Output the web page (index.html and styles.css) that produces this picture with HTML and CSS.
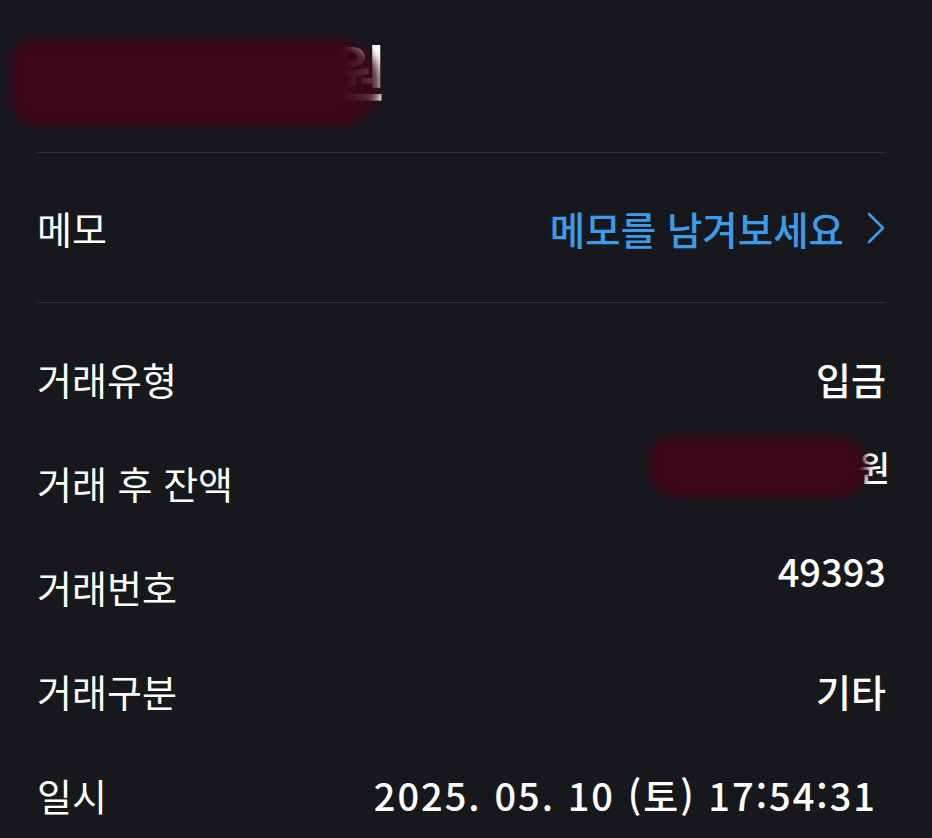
FILE: index.html
```html
<!DOCTYPE html>
<html lang="ko">
<head>
<meta charset="utf-8">
<link rel="stylesheet" href="styles.css">
</head>
<body>
<div class="page">
  <div class="amount">
    <span class="amount-hidden"></span><span class="won">원</span>
    <span class="blob blob-top"></span>
  </div>
  <div class="divider"></div>
  <div class="memo-row">
    <span class="label">메모</span>
    <span class="memo-link">메모를 남겨보세요
      <svg class="chev" viewBox="0 0 20 34" width="20" height="34"><path d="M3 3 L17 17 L3 31" fill="none" stroke="#3d9be9" stroke-width="2.6" stroke-linecap="round" stroke-linejoin="round"/></svg>
    </span>
  </div>
  <div class="divider"></div>
  <div class="details">
    <div class="row"><span class="label">거래유형</span><span class="value">입금</span></div>
    <div class="row"><span class="label">거래 후 잔액</span><span class="value raised balance"><span class="bal-hidden"></span><span class="won-sm">원</span><span class="blob blob-bal"></span></span></div>
    <div class="row"><span class="label">거래번호</span><span class="value raised">49393</span></div>
    <div class="row"><span class="label">거래구분</span><span class="value">기타</span></div>
    <div class="row"><span class="label">일시</span><span class="value date">2025. 05. 10 (토) 17:54:31</span></div>
  </div>
</div>
</body>
</html>
```
FILE: styles.css
```css
html, body {
  margin: 0;
  padding: 0;
  background: #17181c;
}
body {
  font-family: "Noto Sans CJK KR", "Noto Sans", sans-serif;
  color: #ffffff;
  width: 932px;
  height: 838px;
  overflow: hidden;
}
.page {
  padding: 0 46px 0 37px;
}
.amount {
  position: relative;
  height: 152px;
  display: flex;
  align-items: center;
  font-size: 60px;
  font-weight: 700;
  line-height: 1;
}
.amount-hidden {
  display: inline-block;
  width: 294px;
}
.won {
  position: relative;
  top: -6px;
}
.blob {
  position: absolute;
  background: #3c0718;
  filter: blur(5px);
}
.blob-top {
  left: -26px;
  top: 40px;
  width: 370px;
  height: 86px;
  border-radius: 30px 60px 60px 40px;
  background: linear-gradient(90deg, #3c0718 0%, #3c0718 90%, rgba(60, 7, 24, 0.8) 100%);
}
.divider {
  height: 1px;
  background: #2d2e33;
}
.memo-row {
  height: 149px;
  display: flex;
  align-items: center;
  justify-content: space-between;
}
.label {
  font-size: 38px;
  font-weight: 400;
  color: #ffffff;
}
.memo-link {
  font-size: 38.5px;
  font-weight: 500;
  color: #3d9be9;
  display: flex;
  align-items: center;
  gap: 22px;
}
.chev {
  display: block;
}
.details {
  padding-top: 23px;
}
.row {
  height: 104px;
  display: flex;
  align-items: center;
  justify-content: space-between;
}
.value {
  font-size: 38px;
  font-weight: 500;
}
.raised {
  margin-bottom: 32px;
}
.balance {
  position: relative;
  display: flex;
  align-items: center;
  margin-right: -4px;
}
.bal-hidden {
  display: inline-block;
  width: 214px;
}
.won-sm {
  position: relative;
  font-size: 34px;
}
.blob-bal {
  left: 4px;
  top: -6px;
  width: 218px;
  height: 62px;
  border-radius: 30px 40px 40px 40px;
}
.date {
  letter-spacing: 2px;
  margin-right: 9px;
}
```
